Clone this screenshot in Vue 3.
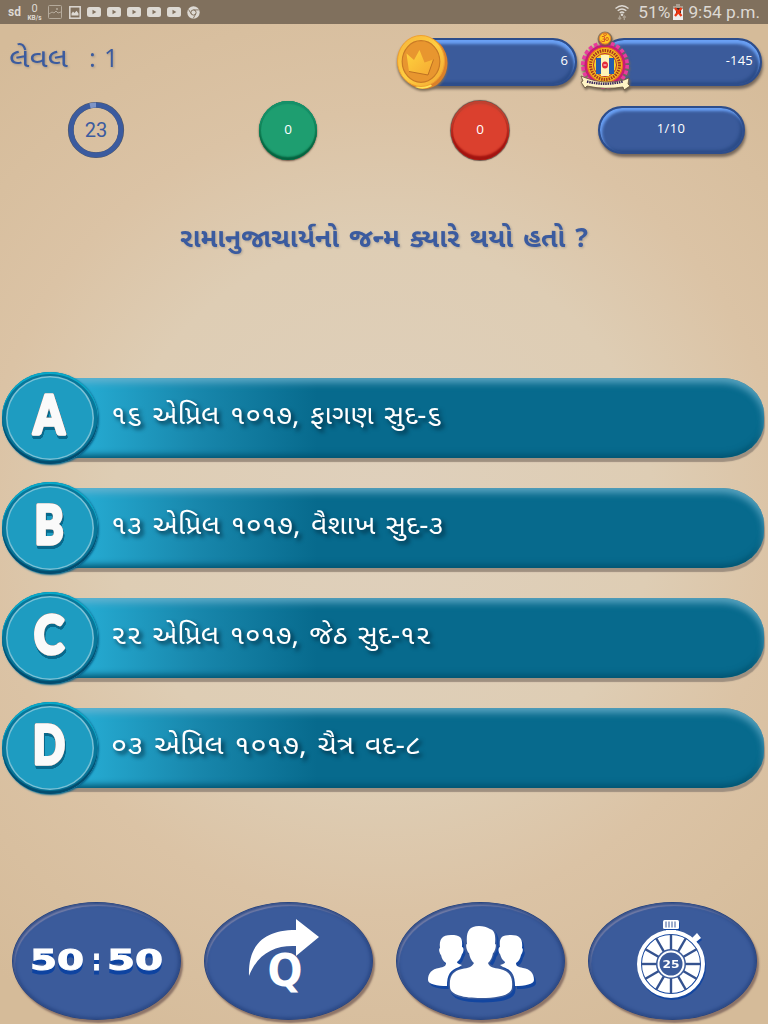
<template>
  <div class="screen">
    <header class="status-bar">
      <div class="status-left">
        <b class="sd">sd</b>
        <div class="speed"><span>0</span><small>KB/s</small></div>
        <svg class="picture" width="14" height="14" viewBox="0 0 14 14" fill="none" stroke="#b5aa9b">
          <rect x=".5" y=".5" width="13" height="13" rx="1" />
          <path d="M1 9l3-2 2 1 2-2 2 2 3-1" />
          <circle cx="9" cy="4" r=".7" />
        </svg>
        <svg width="12" height="13" viewBox="0 0 12 13">
          <rect x=".8" y=".8" width="10.4" height="11.4" fill="none" stroke="#ddd9d3" stroke-width="1.5" />
          <path d="M2.5 9.5V7.5L4 5.5 5.5 7 7.5 4.8 9.5 7.5v2z" fill="#ddd9d3" />
        </svg>
        <svg v-for="n in 5" :key="n" width="14" height="10" viewBox="0 0 14 10">
          <rect width="14" height="10" rx="2.5" fill="#ddd9d3" />
          <path d="M5.5 2.8L9.3 5 5.5 7.2z" fill="#80705d" />
        </svg>
        <svg width="13" height="13" viewBox="0 0 13 13">
          <circle cx="6.5" cy="6.5" r="6.2" fill="#ddd9d3" />
          <circle cx="6.5" cy="6.5" r="2.6" fill="none" stroke="#80705d" stroke-width="1" />
          <path d="M6.5 3.9h5.3M4.2 7.8L1.5 3.4M8.8 7.8L6.2 12.5" stroke="#80705d" stroke-width=".9" />
        </svg>
      </div>
      <div class="status-right">
        <svg class="wifi" width="14" height="17" viewBox="0 0 14 17" fill="none" stroke="#ddd9d3" stroke-width="1.4">
          <path d="M.5 4.5q6.5-5.5 13 0M2.7 6.8q4.3-3.6 8.6 0M4.8 9q2.2-2 4.4 0" />
          <circle cx="7" cy="10.7" r=".6" fill="#ddd9d3" />
          <path d="M4.7 11.5v4M3.2 13.8l1.5 1.5 1.5-1.5M9.3 16v-4M7.8 13.5l1.5-1.5 1.5 1.5" stroke="#a99e8f" />
        </svg>
        <span>51%</span>
        <svg class="battery" width="10" height="16" viewBox="0 0 10 16">
          <path d="M3 0h4v2h3v14H0V2h3z" fill="#eee" />
          <path d="M3 0h4v2h3v3H0V2h3z" fill="#aaa092" />
          <path d="M3 4h5v5H3z" fill="#332b25" />
          <path d="M2 4l6.5 8M8.5 4L2 12" stroke="#ed3713" stroke-width="2.3" />
        </svg>
        <span>9:54 p.m.</span>
      </div>
    </header>

    <section class="topbar">
      <svg class="level" width="130" height="70">
        <text class="guj" x="9" y="43" font-size="27" textLength="59" lengthAdjust="spacingAndGlyphs">લેવલ</text>
        <text x="89" y="43" font-size="26">:</text>
        <text x="104" y="43" font-size="25">1</text>
      </svg>
      <div class="score coins">
        <svg class="coin" width="54" height="60" viewBox="0 0 54 60">
          <defs>
            <linearGradient id="rim" x1="0" y1="0" x2="1" y2="1">
              <stop offset="0" stop-color="#f5b43b" />
              <stop offset=".5" stop-color="#ffce42" />
              <stop offset="1" stop-color="#f2a52f" />
            </linearGradient>
            <linearGradient id="crown" x1="0" y1="0" x2="1" y2="1">
              <stop offset="0" stop-color="#ffd43e" />
              <stop offset="1" stop-color="#f5a832" />
            </linearGradient>
          </defs>
          <ellipse cx="28" cy="30" rx="23.5" ry="26" fill="#db8129" />
          <path d="M19 54q8 4 17-1l-3-4z" fill="#ffe457" />
          <ellipse cx="25" cy="28" rx="23.5" ry="25.5" fill="url(#rim)" stroke="#f0a02f" />
          <ellipse cx="25" cy="28.5" rx="18.8" ry="20.8" fill="#e8962f" stroke="#c97a26" stroke-width="1.2" />
          <path d="M10.5 20.5L18 27l5.5-10 5 12.5 9-3L32 42l-19-3.5z" fill="url(#crown)" />
          <path d="M13 38.5L32 42l5.5-15.5" fill="none" stroke="#be7122" />
        </svg>
        <span>6</span>
      </div>
      <div class="score points">
        <svg class="emblem" width="52" height="64" viewBox="0 0 52 64">
          <circle cx="26" cy="35" r="21.5" fill="none" stroke="#e83c9d" stroke-width="5" stroke-dasharray="3.6 2" />
          <circle cx="26" cy="35" r="20.5" fill="#c81b78" />
          <circle cx="26" cy="35" r="17.5" fill="#f3bd20" stroke="#ed6b24" stroke-width="1.2" />
          <circle cx="26" cy="35" r="14.5" fill="none" stroke="#a93320" stroke-width="3" stroke-dasharray="1.5 1" />
          <circle cx="26" cy="35" r="11.5" fill="#f7d52a" stroke="#bc2a39" />
          <path d="M17 28h5v16h-5z" fill="#265cad" />
          <path d="M30 28h5v16h-5z" fill="#265cad" />
          <path d="M22 25h8v21h-8z" fill="#fff4ba" />
          <ellipse cx="26" cy="35" rx="3" ry="3.5" fill="#e32938" />
          <path d="M24.5 35h3" stroke="#fff" />
          <circle cx="26" cy="9" r="7.5" fill="#6b5740" opacity=".65" />
          <circle cx="26" cy="8.5" r="5.6" fill="#ffc822" stroke="#ed8522" />
          <text class="guj om" x="26" y="12" font-size="9" text-anchor="middle">ૐ</text>
          <path d="M2 46l5 2q18 7 38 2l5-2-1 6 2 2-6 4-1-3q-18 3-36-1l-2 2-4-6 2-1z" fill="#fff4c5" stroke="#64503a" stroke-width=".8" />
          <path d="M8 51.5q18 4.5 36 0" fill="none" stroke="#39285c" stroke-width="2.4" stroke-dasharray="1.5 .8" />
        </svg>
        <span>-145</span>
      </div>
    </section>

    <section class="stats">
      <svg class="timer" width="58" height="58" viewBox="0 0 58 58">
        <circle cx="29" cy="29" r="25.2" fill="none" stroke="#525865" stroke-width="5.8" />
        <circle cx="29" cy="29" r="25" fill="none" stroke="#3b5b9f" stroke-width="5" />
        <path d="M23 4.7Q26 4 29 4" fill="none" stroke="#7d94c6" stroke-width="5" />
        <text x="29" y="36" text-anchor="middle">23</text>
      </svg>
      <div class="ball green">0</div>
      <div class="ball red">0</div>
      <div class="progress">1/10</div>
    </section>

    <svg class="question" width="768" height="60">
      <text class="guj" x="180" y="37" font-size="26" textLength="408" lengthAdjust="spacingAndGlyphs">રામાનુજાચાર્યનો જન્મ ક્યારે થયો હતો ?</text>
    </svg>

    <main class="options">
      <div v-for="option in options" :key="option.letter" class="option">
        <div class="bar"></div>
        <div class="letter">
          <svg width="80" height="92">
            <text x="39" y="62" :textLength="option.letterWidth" lengthAdjust="spacingAndGlyphs" text-anchor="middle">{{ option.letter }}</text>
          </svg>
        </div>
        <svg class="answer" width="380" height="60">
          <text class="guj" x="0" y="37" font-size="27" :textLength="option.width" lengthAdjust="spacingAndGlyphs">{{ option.text }}</text>
        </svg>
      </div>
    </main>

    <footer class="lifelines">
      <button class="lifeline">
        <svg width="168" height="118" viewBox="0 0 168 118">
          <g class="fifty">
            <text x="17" y="67" textLength="54" lengthAdjust="spacingAndGlyphs">50</text>
            <text x="79" y="67" textLength="9" lengthAdjust="spacingAndGlyphs">:</text>
            <text x="94" y="67" textLength="56" lengthAdjust="spacingAndGlyphs">50</text>
          </g>
        </svg>
      </button>
      <button class="lifeline">
        <svg width="168" height="118" viewBox="0 0 168 118">
          <path d="M44 73C43 46 55 27 91 27V16l23 18-23 19v-10C70 42 53 50 44 73z" fill="#fff" />
          <text class="skip" x="80" y="83" text-anchor="middle" textLength="35" lengthAdjust="spacingAndGlyphs">Q</text>
        </svg>
      </button>
      <button class="lifeline">
        <svg width="168" height="118" viewBox="0 0 168 118">
          <g class="people" transform="translate(-1 -1)">
            <path :d="sidePerson" />
            <path :d="sidePerson" transform="matrix(-1 0 0 1 170 0)" />
            <path class="front" d="M83 24c-11 0-13 7-12 18-2 0 0 8 2 9 1 5 2 7 5 10-2 4-6 5-12 6-9 2-13 7-12 18 0 8 14 11 31 11s31-3 31-11c1-11-3-16-12-18-6-1-11-2-12-6 3-3 4-5 5-10 2-1 4-9 2-9 1-10-1-14-5-15-3-2-7-3-11-3z" />
          </g>
        </svg>
      </button>
      <button class="lifeline">
        <svg width="168" height="118" viewBox="0 0 168 118">
          <g class="watch" transform="translate(-1 -1)">
            <circle cx="83" cy="62" r="32" fill="none" stroke="#fff" stroke-width="4" />
            <circle cx="83" cy="62" r="21.5" fill="none" stroke="#fff" stroke-width="15" />
            <path v-for="n in 12" :key="n" d="M83 48V32" :transform="`rotate(${n * 30} 83 62)`" stroke="#34528f" stroke-width="2.4" />
            <circle cx="83" cy="62" r="15" fill="#3b5b9b" />
            <circle cx="83" cy="62" r="12.5" fill="none" stroke="#fff" stroke-width="2" />
            <rect x="75" y="18" width="16" height="9" rx="1.5" fill="#fff" />
            <path d="M78 19.5v6M81 19.5v6M84 19.5v6M87 19.5v6" stroke="#3b5b9b" />
            <path d="M78 28h10v2H78zM104 36l5-5 4 5-5 4z" fill="#fff" />
            <text x="83" y="66" text-anchor="middle" textLength="17" lengthAdjust="spacingAndGlyphs">25</text>
          </g>
        </svg>
      </button>
    </footer>
  </div>
</template>

<script setup>
const options = [
  { letter: 'A', letterWidth: 31, text: '૧૬ એપ્રિલ ૧૦૧૭, ફાગણ સુદ-૬', width: 331 },
  { letter: 'B', letterWidth: 29, text: '૧૩ એપ્રિલ ૧૦૧૭, વૈશાખ સુદ-૩', width: 333 },
  { letter: 'C', letterWidth: 30, text: '૨૨ એપ્રિલ ૧૦૧૭, જેઠ સુદ-૧૨', width: 320 },
  { letter: 'D', letterWidth: 32, text: '૦૩ એપ્રિલ ૧૦૧૭, ચૈત્ર વદ-૮', width: 310 }
];

const sidePerson = 'M55 33c-9 0-12 4-11 13-2 1 0 6 1 7 1 4 2 6 5 8 0 3-2 4-7 5-7 1-11 5-11 12 0 4 9 6 19 6 0-11 3-16 12-19l3-2c-4-1-5-2-5-3 3-2 4-5 5-8 2-2 2-7 0-7 1-10-2-12-11-12z';
</script>

<style>
body {
  margin: 0;
}
</style>

<style scoped>
.screen {
  width: 768px;
  height: 1024px;
  overflow: hidden;
  display: flex;
  flex-direction: column;
  font-family: "Open Sans", "Noto Sans", sans-serif;
  background: radial-gradient(circle at 50% 50%, #dfd0bc 0, #decdb4 270px, #dbc3a5 400px, #d5bb99 600px);
}

.guj {
  font-family: "Noto Sans Gujarati", "Noto Sans", "Lohit Gujarati", sans-serif;
  word-spacing: 3px;
}

.status-bar {
  height: 24px;
  flex-shrink: 0;
  display: flex;
  justify-content: space-between;
  align-items: center;
  box-sizing: border-box;
  padding: 0 8px;
  background: #80705d;
  color: #ddd9d3;
  font-family: Roboto, sans-serif;
}

.status-left {
  display: flex;
  align-items: center;
  gap: 6px;
}

.sd {
  width: 13px;
  font-size: 12px;
}

.speed {
  width: 15px;
  display: flex;
  flex-direction: column;
  align-items: center;
  font-size: 11px;
  line-height: 12px;
}

.speed small {
  font-size: 6.5px;
  line-height: 7px;
  font-weight: bold;
}

.picture {
  margin-right: 1px;
}

.status-right {
  display: flex;
  align-items: center;
  font-size: 17.3px;
}

.wifi {
  margin-right: 9px;
}

.battery {
  margin: 0 5px 0 3px;
}

.topbar {
  height: 70px;
  flex-shrink: 0;
  display: flex;
  align-items: flex-start;
}

.level {
  margin-right: 280px;
  fill: #3b5b9f;
  filter: drop-shadow(1px 1px 1px #77777788);
}

.score {
  position: relative;
  box-sizing: border-box;
  height: 48px;
  margin-top: 14px;
  padding-right: 7px;
  border: 2px solid #2d4d8b;
  border-radius: 24px;
  background: #3b5b9b;
  box-shadow: inset -1px 4px 3px #6aa0f4, inset -3px -2px 3px #2c4c88, 1px 3px 3px #75675b;
  color: #fff;
  font-size: 13px;
  line-height: 40px;
  text-align: right;
}

.coins {
  width: 167px;
}

.points {
  width: 162px;
  margin-left: 23px;
}

.points span {
  letter-spacing: .2px;
}

.coin {
  position: absolute;
  left: -16px;
  top: -7px;
  filter: drop-shadow(0 2px 1px #806f59);
}

.emblem {
  position: absolute;
  left: -23px;
  top: -10px;
  filter: drop-shadow(1px 2px 1px #776955);
}

.om {
  fill: #cc3b26;
}

.stats {
  height: 72px;
  flex-shrink: 0;
  display: grid;
  grid-template-columns: repeat(4, 1fr);
  align-items: center;
  justify-items: center;
}

.timer {
  fill: #3b5b9f;
  font-family: Roboto, sans-serif;
  font-size: 20px;
}

.ball {
  width: 58px;
  height: 59px;
  border-radius: 50%;
  line-height: 56px;
  text-align: center;
  color: #fff;
  font-size: 13.5px;
}

.green {
  background: #1e9e70;
  box-shadow: inset 0 3px 1px #159069, inset 0 -3px 2px #05633f, inset 0 0 0 2px #138459, 0 1px 2px #604739;
}

.red {
  background: #db402e;
  box-shadow: inset 0 3px 2px #c04331, inset 0 -4px 2px #a31410, inset 0 0 0 2px #b92a1f, 0 0 1px 1px #695047;
}

.progress {
  box-sizing: border-box;
  width: 147px;
  height: 48px;
  margin-right: 2px;
  border: 2px solid #2d4d8b;
  border-radius: 24px;
  background: #3b5b9b;
  box-shadow: inset 2px 3px 3px #6aa0f4, inset -3px -2px 3px #2c4c88, 1px 3px 3px #75675b;
  color: #fff;
  font-size: 13px;
  letter-spacing: .3px;
  line-height: 41px;
  text-align: center;
}

.question {
  margin-top: 44px;
  flex-shrink: 0;
  fill: #3b5b9f;
  font-weight: bold;
  filter: drop-shadow(1px 1px 1px #7777);
}

.options {
  height: 440px;
  margin-top: 102px;
  flex-shrink: 0;
  display: flex;
  flex-direction: column;
}

.option {
  position: relative;
  height: 110px;
  display: flex;
  align-items: flex-start;
}

.bar {
  position: absolute;
  left: 55px;
  right: 4px;
  top: 6px;
  height: 80px;
  border-radius: 6px 42px 42px 6px / 4px 36px 36px 4px;
  background: linear-gradient(90deg, #25a9d0 5%, #1887ac 20%, #076a8d 37%);
  box-shadow: inset -1px 6px 7px -1px #72b5cfbb, inset 0 -5px 6px -2px #02526f, 1px 4px 1px #9f9080;
}

.letter {
  position: relative;
  width: 96px;
  height: 92px;
  margin-left: 2px;
  border-radius: 50%;
  background: #1e9cc1;
  box-shadow: inset 0 2px 0 #0aa9c8, inset 0 -3px 1px #024c6e, inset 0 0 0 4px #08779a, inset 0 0 0 5.5px #7ac0d5, 1px 1px 2px #06628a;
  display: flex;
  align-items: center;
  justify-content: center;
}

.letter text {
  fill: #fafafa;
  stroke: #fafafa;
  stroke-width: 3.5;
  stroke-linejoin: round;
  font-family: Lato, sans-serif;
  font-size: 53px;
  font-weight: 900;
  filter: drop-shadow(0 0 .6px #666) drop-shadow(0 0 .4px #777) drop-shadow(1px 3px 0 #08698c);
}

.answer {
  position: relative;
  margin: 15px 0 0 13px;
  fill: #fff;
  filter: drop-shadow(3px 3px 2px #002f45);
}

.lifelines {
  height: 122px;
  margin-top: auto;
  flex-shrink: 0;
  display: grid;
  grid-template-columns: repeat(4, 1fr);
  justify-items: center;
  align-items: start;
}

.lifeline {
  box-sizing: border-box;
  width: 169px;
  height: 118px;
  padding: 0;
  border: 1px solid #2b467f;
  border-radius: 50%;
  background: #3b5b9b;
  box-shadow: inset 0 0 3px 2px #2d4b88, inset 2px 3px 1px #8b8db0, 2px 3px 2px #8d7468;
  overflow: hidden;
}

.lifeline svg {
  display: block;
}

.fifty {
  fill: #fff;
  stroke: #fff;
  stroke-width: 1;
  font: bold 29px "DejaVu Sans", sans-serif;
  filter: drop-shadow(0 4px 0 #0d43a1);
}

.skip {
  fill: #fff;
  font: bold 45px "DejaVu Sans", sans-serif;
}

.people {
  fill: #fff;
  filter: drop-shadow(2px 3px 0 #1346a0);
}

.front {
  stroke: #3b5b9b;
  stroke-width: 3;
  paint-order: stroke;
}

.watch {
  filter: drop-shadow(1px 2px 0 #1346a0);
}

.watch text {
  fill: #fff;
  font: bold 10px "DejaVu Sans", sans-serif;
}
</style>
